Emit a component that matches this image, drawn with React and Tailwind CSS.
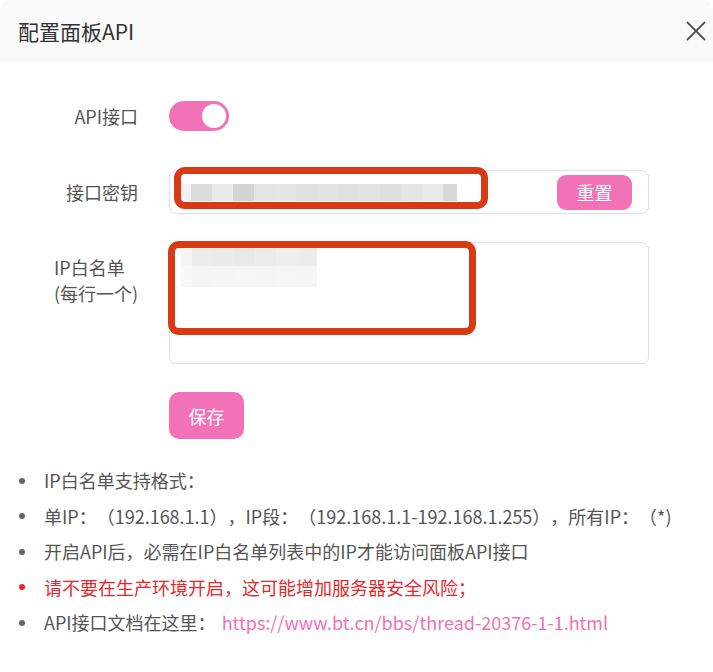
import React from "react";

const font = { fontFamily: '"Noto Sans CJK SC", "Noto Sans", sans-serif' };

function Blocks({ cells, h }) {
  return (
    <div className="flex">
      {cells.map((c, i) => (
        <div key={i} style={{ width: c[0], height: h, background: c[1] }} />
      ))}
    </div>
  );
}

export default function App() {
  const keyCells = [
    [10, "#f2f2f2"], [21, "#dcdcdc"], [21, "#e9e9e9"], [21, "#d4d4d4"], [21, "#e4e4e4"],
    [21, "#e6e6e6"], [21, "#e0e0e0"], [21, "#e3e3e3"], [21, "#dfe0e0"], [21, "#e2e2e2"],
    [21, "#dedfdf"], [21, "#e4e4e4"], [21, "#e8e8e8"], [14, "#d8d8d8"],
  ];
  const ipTop = [[11, "#f4f4f4"], [21, "#ececec"], [21, "#eaeaea"], [21, "#e8e8e8"], [21, "#ebebeb"], [21, "#eeeeee"], [20, "#ececec"]];
  const ipBot = [[11, "#f8f8f8"], [21, "#f4f4f4"], [21, "#f5f5f5"], [21, "#f6f6f6"], [21, "#f5f5f5"], [21, "#f6f6f6"], [20, "#f5f5f5"]];

  return (
    <div className="w-[713px] h-[672px] bg-white overflow-hidden [text-spacing-trim:space-all]" style={font}>
      <div className="h-[62px] bg-[#fafafa] rounded-t-[10px] flex items-center justify-between pl-[18px] pr-[5px]">
        <span className="text-[21px] text-[#333] leading-none">配置面板API</span>
        <svg width="22" height="22" viewBox="0 0 22 22" className="mr-[1px]">
          <path d="M2 2 L20 20 M20 2 L2 20" stroke="#555" strokeWidth="1.8" fill="none" />
        </svg>
      </div>

      <div className="pt-[39px]">
        <div className="flex items-center h-[30px]">
          <div className="w-[138px] text-right text-[18px] text-[#555] leading-none">API接口</div>
          <div className="ml-[31px] w-[60px] h-[30px] rounded-full bg-[#f172b7] flex items-center justify-end pr-[3px]">
            <div className="w-[24px] h-[24px] rounded-full bg-white" />
          </div>
        </div>

        <div className="flex items-center mt-[39px]">
          <div className="w-[138px] text-right text-[18px] text-[#555] leading-none">接口密钥</div>
          <div className="relative ml-[31px] w-[480px] h-[44px] border border-[#dcdfe6] rounded-[7px] flex items-center justify-between pl-[11px] pr-[16px]">
            <Blocks cells={keyCells} h={17} />
            <button className="w-[75px] h-[35px] rounded-[9px] bg-[#f172b7] text-white text-[18px] leading-none">重置</button>
            <div className="absolute left-[4px] top-[-4px] w-[314px] h-[42px] border-[7px] border-[#d93a16] rounded-[11px]" />
          </div>
        </div>

        <div className="flex items-start mt-[28px]">
          <div className="w-[138px] pl-[54px] text-[18px] text-[#555] leading-[26px] pt-[12px] whitespace-nowrap">
            <div>IP白名单</div>
            <div>(每行一个)</div>
          </div>
          <div className="relative ml-[31px] w-[480px] h-[122px] border border-[#dcdfe6] rounded-[7px] pl-[11px] pt-[5px]">
            <Blocks cells={ipTop} h={18} />
            <Blocks cells={ipBot} h={21} />
            <div className="absolute left-[-2px] top-[-2px] w-[308px] h-[94px] border-[7px] border-[#d93a16] rounded-[11px]" />
          </div>
        </div>

        <div className="mt-[28px] ml-[169px]">
          <button className="w-[75px] h-[47px] rounded-[10px] bg-[#f172b7] text-white text-[18px] leading-none">保存</button>
        </div>

        <ul className="mt-[24px] text-[18px] text-[#555] leading-[35.5px]">
          {[
            ["IP白名单支持格式：", "#555", "#666"],
            ["单IP：（192.168.1.1），IP段：（192.168.1.1-192.168.1.255），所有IP：（*)", "#555", "#666"],
            ["开启API后，必需在IP白名单列表中的IP才能访问面板API接口", "#555", "#666"],
            ["请不要在生产环境开启，这可能增加服务器安全风险；", "#e8262a", "#e8262a"],
          ].map(([t, c, d], i) => (
            <li key={i} className="flex items-center h-[35.5px]">
              <span className="w-[44px] flex justify-center">
                <span className="w-[6px] h-[6px] rounded-full" style={{ background: d }} />
              </span>
              <span className="whitespace-nowrap" style={{ color: c }}>{t}</span>
            </li>
          ))}
          <li className="flex items-center h-[35.5px]">
            <span className="w-[44px] flex justify-center">
              <span className="w-[6px] h-[6px] rounded-full bg-[#666]" />
            </span>
            <span className="whitespace-nowrap">API接口文档在这里：</span>
            <span className="whitespace-nowrap text-[#f26fb6] ml-[6px]">https://www.bt.cn/bbs/thread-20376-1-1.html</span>
          </li>
        </ul>
      </div>
    </div>
  );
}
